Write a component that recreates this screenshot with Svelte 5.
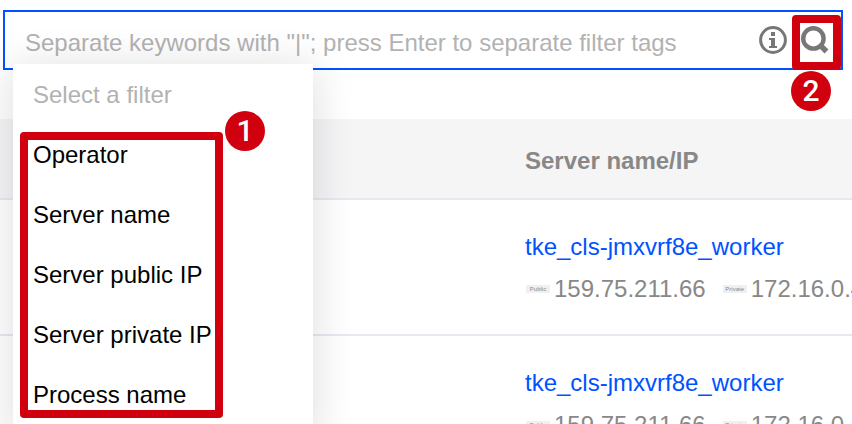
<script>
  let keyword = $state('')

  const filters = [
    'Operator',
    'Server name',
    'Server public IP',
    'Server private IP',
    'Process name'
  ]

  const servers = [
    { name: 'tke_cls-jmxvrf8e_worker', publicIp: '159.75.211.66', privateIp: '172.16.0.4' },
    { name: 'tke_cls-jmxvrf8e_worker', publicIp: '159.75.211.66', privateIp: '172.16.0.4' }
  ]
</script>

<div class="page">
  <div class="search">
    <input
      type="text"
      aria-label="Search keywords"
      placeholder={'Separate keywords with "|"; press Enter to separate filter tags'}
      bind:value={keyword}
    />
    <button class="icon" aria-label="Help">
      <svg width="28" height="28" viewBox="0 0 28 28">
        <circle cx="14" cy="14" r="12.4" fill="none" stroke="#777" stroke-width="3" />
        <path d="M12 6h4v4h-4zM10 12h6v8h2v2h-8v-2h2v-6h-2z" fill="#777" />
      </svg>
    </button>
    <button class="icon find" aria-label="Search">
      <svg width="28" height="28" viewBox="0 0 28 28">
        <circle cx="12.4" cy="12.4" r="10.2" fill="none" stroke="#777" stroke-width="4.4" />
        <path d="M18.5 18.5l7 7" stroke="#777" stroke-width="5.4" />
      </svg>
      <span class="mark"></span>
      <span class="step">2</span>
    </button>

    <div class="menu">
      <div class="title">Select a filter</div>
      <div class="options">
        {#each filters as filter}
          <button class="option">{filter}</button>
        {/each}
        <span class="mark"></span>
        <span class="step">1</span>
      </div>
    </div>
  </div>

  <table>
    <colgroup>
      <col class="first" />
      <col />
    </colgroup>
    <thead>
      <tr>
        <th></th>
        <th>Server name/IP</th>
      </tr>
    </thead>
    <tbody>
      {#each servers as server}
        <tr>
          <td></td>
          <td>
            <a href="#server">{server.name}</a>
            <div class="ips">
              <span class="tag">Public</span>
              <span class="ip">{server.publicIp}</span>
              <span class="tag">Private</span>
              <span class="ip">{server.privateIp}</span>
            </div>
          </td>
        </tr>
      {/each}
    </tbody>
  </table>
</div>

<style>
  .page {
    box-sizing: border-box;
    height: 100vh;
    padding-top: 10px;
    overflow: hidden;
    background: #fff;
    font-family: 'Liberation Sans', Arial, sans-serif;
    font-size: 24px;
    color: #000;
  }

  .search {
    position: relative;
    display: flex;
    align-items: center;
    gap: 14px;
    box-sizing: border-box;
    height: 60px;
    margin: 0 9px 49px 3px;
    padding: 0 12px 0 20px;
    border: 2px solid #0052ff;
  }

  input {
    flex: 1;
    min-width: 0;
    height: 56px;
    padding: 6px 0 0;
    box-sizing: border-box;
    border: 0;
    outline: 0;
    background: none;
    font: inherit;
  }

  input::placeholder {
    color: #b2b2b2;
    opacity: 1;
  }

  button {
    padding: 0;
    border: 0;
    background: none;
    color: inherit;
    font: inherit;
    cursor: pointer;
  }

  .icon {
    display: flex;
  }

  .find {
    position: relative;
  }

  .menu {
    position: absolute;
    top: 52px;
    left: 8px;
    z-index: 1;
    width: 300px;
    padding: 1px 0 12px;
    background: #fff;
    box-shadow: 0 4px 40px rgba(20, 20, 40, 0.15);
    line-height: 60px;
  }

  .title {
    padding: 0 20px;
    color: #b2b2b2;
  }

  .options {
    position: relative;
    width: 210px;
  }

  .option {
    display: block;
    width: 100%;
    padding: 0 0 0 20px;
    text-align: left;
    white-space: nowrap;
    line-height: 60px;
  }

  /* numbered callouts over the controls */
  .mark {
    position: absolute;
    box-sizing: border-box;
    border: 8px solid #d0000f;
    border-radius: 4px;
    pointer-events: none;
  }

  .step {
    position: absolute;
    width: 40px;
    height: 40px;
    border-radius: 50%;
    background: #d0000f;
    color: #fff;
    font-family: Roboto, sans-serif;
    font-size: 30px;
    font-weight: 500;
    line-height: 40px;
    text-align: center;
  }

  .options .mark {
    inset: 7px 0 7px 7px;
  }

  .options .step {
    top: -14px;
    right: -42px;
  }

  .find .mark {
    inset: -11px -12px -16px -9px;
  }

  .find .step {
    top: 45px;
    right: -2px;
  }

  table {
    width: 100%;
    table-layout: fixed;
    border-collapse: separate;
    border-spacing: 0;
  }

  .first {
    width: 505px;
  }

  th,
  td {
    border-bottom: 2px solid #e7e8f0;
    text-align: left;
    white-space: nowrap;
  }

  th {
    padding: 4px 20px 0;
    background: #f5f5f6;
    color: #888;
    line-height: 75px;
  }

  td {
    padding: 26px 20px 24px;
    line-height: 42px;
  }

  a {
    color: #0052ff;
    text-decoration: none;
  }

  .ips {
    display: flex;
    align-items: center;
    color: #888;
  }

  .tag {
    flex: none;
    width: 24px;
    margin: 0 4px 0 1px;
    background: #f0f0f0;
    font-size: 6px;
    line-height: 8px;
    text-align: center;
  }

  .ip {
    flex: none;
    margin-right: 16px;
  }
</style>
